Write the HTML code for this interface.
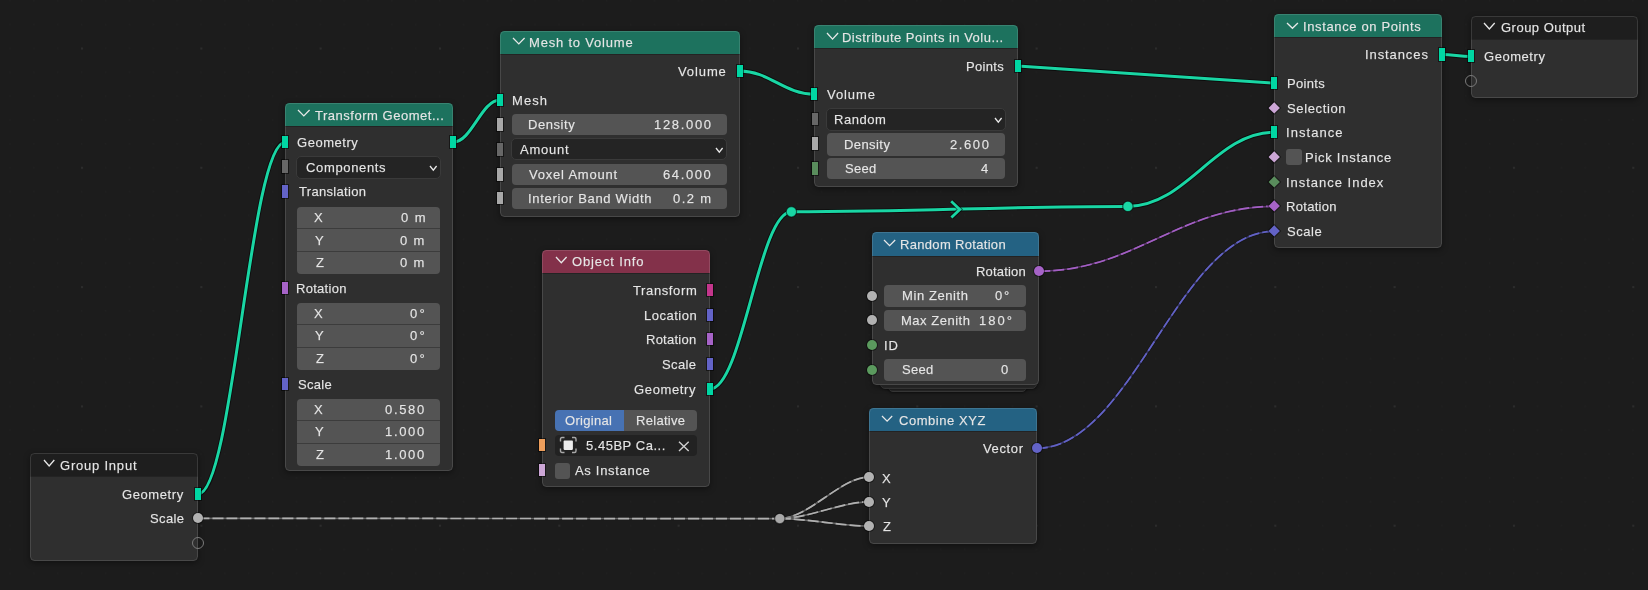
<!DOCTYPE html>
<html><head><meta charset="utf-8"><style>
html,body{margin:0;padding:0;width:1648px;height:590px;overflow:hidden;background:#1c1c1c;}
body{position:relative;font-family:"Liberation Sans", sans-serif;}
.a{position:absolute;overflow:visible}
.t{position:absolute;font-size:13px;line-height:15px;white-space:pre;color:#e6e6e6;will-change:transform;-webkit-text-stroke:0.25px rgba(230,230,230,0.6)}
.node{position:absolute;box-sizing:border-box;background:#2f2f2f;border-radius:4.5px;overflow:hidden;box-shadow:0 2px 6px rgba(0,0,0,0.4)}
.hdr{width:100%;border-bottom:1px solid #232323}
.ol{position:absolute;left:0;top:0;right:0;bottom:0;border:1px solid rgba(255,255,255,0.12);border-radius:4.5px}
.rs{position:absolute;box-shadow:0 0 0 1px rgba(0,0,0,0.5)}
.cs{position:absolute;border-radius:50%;box-shadow:0 0 0 1px rgba(0,0,0,0.45)}
.ds{position:absolute;transform:rotate(45deg);box-shadow:0 0 0 1px rgba(0,0,0,0.45)}
.fld{position:absolute}
.menu{position:absolute;box-sizing:border-box;background:#242424;border:1px solid #3a3a3a;border-radius:5px}
svg.links{position:absolute;left:0;top:0}
</style></head><body>
<svg class="links" width="1648" height="590"><defs><pattern id="gmin" x="81.0" y="47.5" width="23.865" height="23.86" patternUnits="userSpaceOnUse"><rect x="0" y="0" width="1.2" height="1.5" fill="#202020"/></pattern><pattern id="gmaj" x="81.0" y="47.5" width="119.33" height="119.3" patternUnits="userSpaceOnUse"><rect x="0" y="0" width="2" height="2" fill="#2c2c2c"/></pattern></defs><rect width="1648" height="590" fill="url(#gmin)"/><rect width="1648" height="590" fill="url(#gmaj)"/></svg>
<svg class="links" width="1648" height="590"><path d="M198.2,494.0 C233.0,494.0 250.3,142.2 285.1,142.2" fill="none" stroke="rgba(0,0,0,0.55)" stroke-width="4.8"/><path d="M198.2,494.0 C233.0,494.0 250.3,142.2 285.1,142.2" fill="none" stroke="#19d6a4" stroke-width="3.0"/><path d="M453.0,142.2 C471.8,142.2 481.2,100.0 500.0,100.0" fill="none" stroke="rgba(0,0,0,0.55)" stroke-width="4.8"/><path d="M453.0,142.2 C471.8,142.2 481.2,100.0 500.0,100.0" fill="none" stroke="#19d6a4" stroke-width="3.0"/><path d="M739.6,71.0 C769.4,71.0 784.4,94.2 814.2,94.2" fill="none" stroke="rgba(0,0,0,0.55)" stroke-width="4.8"/><path d="M739.6,71.0 C769.4,71.0 784.4,94.2 814.2,94.2" fill="none" stroke="#19d6a4" stroke-width="3.0"/><path d="M1017.8,66.0 L1274.2,83.2" fill="none" stroke="rgba(0,0,0,0.55)" stroke-width="4.8"/><path d="M1017.8,66.0 L1274.2,83.2" fill="none" stroke="#19d6a4" stroke-width="3.0"/><path d="M1441.8,54.5 C1453.4,54.5 1459.2,56.5 1470.8,56.5" fill="none" stroke="rgba(0,0,0,0.55)" stroke-width="4.8"/><path d="M1441.8,54.5 C1453.4,54.5 1459.2,56.5 1470.8,56.5" fill="none" stroke="#19d6a4" stroke-width="3.0"/><path d="M710.0,389.0 C742.6,389.0 758.8,211.8 791.4,211.8" fill="none" stroke="rgba(0,0,0,0.55)" stroke-width="4.8"/><path d="M710.0,389.0 C742.6,389.0 758.8,211.8 791.4,211.8" fill="none" stroke="#19d6a4" stroke-width="3.0"/><path d="M791.4,211.8 C926.0,211.8 993.3,206.4 1127.9,206.4" fill="none" stroke="rgba(0,0,0,0.55)" stroke-width="4.8"/><path d="M791.4,211.8 C926.0,211.8 993.3,206.4 1127.9,206.4" fill="none" stroke="#19d6a4" stroke-width="3.0"/><path d="M1127.9,206.4 C1186.4,206.4 1215.7,132.2 1274.2,132.2" fill="none" stroke="rgba(0,0,0,0.55)" stroke-width="4.8"/><path d="M1127.9,206.4 C1186.4,206.4 1215.7,132.2 1274.2,132.2" fill="none" stroke="#19d6a4" stroke-width="3.0"/><path d="M1039.2,271.2 C1133.2,271.2 1180.2,206.3 1274.2,206.3" fill="none" stroke="rgba(0,0,0,0.25)" stroke-width="3.2"/><path d="M1039.2,271.2 C1133.2,271.2 1180.2,206.3 1274.2,206.3" fill="none" stroke="#a35fc4" stroke-opacity="0.5" stroke-width="1.7"/><path d="M1039.2,271.2 C1133.2,271.2 1180.2,206.3 1274.2,206.3" fill="none" stroke="#a35fc4" stroke-width="1.7" stroke-dasharray="11 3"/><path d="M1036.8,448.3 C1131.8,448.3 1179.2,231.3 1274.2,231.3" fill="none" stroke="rgba(0,0,0,0.25)" stroke-width="3.2"/><path d="M1036.8,448.3 C1131.8,448.3 1179.2,231.3 1274.2,231.3" fill="none" stroke="#6262c6" stroke-opacity="0.5" stroke-width="1.7"/><path d="M1036.8,448.3 C1131.8,448.3 1179.2,231.3 1274.2,231.3" fill="none" stroke="#6262c6" stroke-width="1.7" stroke-dasharray="11 3"/><path d="M198.2,518.4 C430.8,518.4 547.2,518.6 779.8,518.6" fill="none" stroke="rgba(0,0,0,0.25)" stroke-width="3.2"/><path d="M198.2,518.4 C430.8,518.4 547.2,518.6 779.8,518.6" fill="none" stroke="#b0b0b0" stroke-opacity="0.5" stroke-width="1.7"/><path d="M198.2,518.4 C430.8,518.4 547.2,518.6 779.8,518.6" fill="none" stroke="#b0b0b0" stroke-width="1.7" stroke-dasharray="11 3"/><path d="M779.8,518.6 C808.5,518.6 840.7,476.9 869.4,476.9" fill="none" stroke="rgba(0,0,0,0.25)" stroke-width="3.2"/><path d="M779.8,518.6 C808.5,518.6 840.7,476.9 869.4,476.9" fill="none" stroke="#b0b0b0" stroke-opacity="0.5" stroke-width="1.7"/><path d="M779.8,518.6 C808.5,518.6 840.7,476.9 869.4,476.9" fill="none" stroke="#b0b0b0" stroke-width="1.7" stroke-dasharray="11 3"/><path d="M779.8,518.6 C808.5,518.6 840.7,501.8 869.4,501.8" fill="none" stroke="rgba(0,0,0,0.25)" stroke-width="3.2"/><path d="M779.8,518.6 C808.5,518.6 840.7,501.8 869.4,501.8" fill="none" stroke="#b0b0b0" stroke-opacity="0.5" stroke-width="1.7"/><path d="M779.8,518.6 C808.5,518.6 840.7,501.8 869.4,501.8" fill="none" stroke="#b0b0b0" stroke-width="1.7" stroke-dasharray="11 3"/><path d="M779.8,518.6 C808.5,518.6 840.7,526.0 869.4,526.0" fill="none" stroke="rgba(0,0,0,0.25)" stroke-width="3.2"/><path d="M779.8,518.6 C808.5,518.6 840.7,526.0 869.4,526.0" fill="none" stroke="#b0b0b0" stroke-opacity="0.5" stroke-width="1.7"/><path d="M779.8,518.6 C808.5,518.6 840.7,526.0 869.4,526.0" fill="none" stroke="#b0b0b0" stroke-width="1.7" stroke-dasharray="11 3"/><polyline points="951.2,201.2 959.8,209.4 951.4,217.6" fill="none" stroke="rgba(0,0,0,0.55)" stroke-width="4.6"/><polyline points="951.2,201.2 959.8,209.4 951.4,217.6" fill="none" stroke="#19d6a4" stroke-width="2.8"/><circle cx="791.4" cy="211.8" r="5.2" fill="#19d6a4" stroke="rgba(0,0,0,0.55)" stroke-width="1.2"/><circle cx="1127.9" cy="206.4" r="5.2" fill="#19d6a4" stroke="rgba(0,0,0,0.55)" stroke-width="1.2"/><circle cx="779.8" cy="518.6" r="5.2" fill="#a9a9a9" stroke="rgba(0,0,0,0.55)" stroke-width="1.2"/></svg>
<div class="node" style="left:30.4px;top:453.2px;width:167.9px;height:107.6px"><div class="hdr" style="height:22.8px;background:#1e1e1e"></div><div class="ol"></div></div>
<svg class="a" style="left:41.8px;top:458.2px" width="14.3" height="10.0"><polyline points="2,2 7.15,8.00 12.30,2" fill="none" stroke="#e8e8e8" stroke-width="1.3"/></svg>
<span class="t" style="left:60.30px;top:458.25px;letter-spacing:0.786px;color:#e6e6e6">Group Input</span>
<span class="t" style="left:122.40px;top:487.05px;letter-spacing:0.590px;color:#e6e6e6">Geometry</span>
<div class="rs" style="left:195.0px;top:487.7px;width:6px;height:12.3px;background:#00d6a3"></div>
<span class="t" style="left:150.40px;top:511.15px;letter-spacing:0.353px;color:#e6e6e6">Scale</span>
<div class="cs" style="left:193.0px;top:513.3px;width:10px;height:10px;background:#b2b2b2"></div>
<div class="cs" style="left:192.0px;top:537.0px;width:12px;height:12px;box-sizing:border-box;border:1.2px solid #7a7a7a;background:transparent;box-shadow:none"></div>
<div class="node" style="left:285.1px;top:103.1px;width:167.9px;height:367.9px"><div class="hdr" style="height:23.4px;background:#1d725e"></div><div class="ol"></div></div>
<svg class="a" style="left:296.2px;top:108.4px" width="15.6" height="9.9"><polyline points="2,2 7.80,7.90 13.60,2" fill="none" stroke="#e8e8e8" stroke-width="1.3"/></svg>
<span class="t" style="left:314.60px;top:108.15px;letter-spacing:0.521px;color:#e6e6e6">Transform Geomet...</span>
<span class="t" style="left:297.40px;top:135.25px;letter-spacing:0.533px;color:#e6e6e6">Geometry</span>
<div class="rs" style="left:282.1px;top:135.8px;width:6px;height:12.3px;background:#00d6a3"></div>
<div class="rs" style="left:450.0px;top:135.8px;width:6px;height:12.3px;background:#00d6a3"></div>
<div class="menu" style="left:296.3px;top:155.8px;width:144.7px;height:23.3px"></div>
<svg class="a" style="left:428.2px;top:164.4px" width="10.6" height="8.2"><polyline points="2,2 5.30,6.20 8.60,2" fill="none" stroke="#e8e8e8" stroke-width="1.3"/></svg>
<span class="t" style="left:305.50px;top:160.15px;letter-spacing:0.655px;color:#e6e6e6">Components</span>
<div class="rs" style="left:282.1px;top:160.4px;width:6px;height:12.3px;background:#676767"></div>
<span class="t" style="left:298.50px;top:183.95px;letter-spacing:0.310px;color:#e6e6e6">Translation</span>
<div class="rs" style="left:282.1px;top:185.3px;width:6px;height:12.3px;background:#6363c7"></div>
<div class="fld" style="left:296.8px;top:206.6px;width:143.4px;height:67.7px;background:#545454;border-radius:4px;"></div>
<div class="a" style="left:296.8px;top:227.6px;width:143.4px;height:1.2px;background:#3c3c3c"></div>
<div class="a" style="left:296.8px;top:250.7px;width:143.4px;height:1.2px;background:#3c3c3c"></div>
<span class="t" style="left:314.20px;top:210.45px;letter-spacing:0.000px;color:#e6e6e6">X</span>
<span class="t" style="left:400.50px;top:210.45px;letter-spacing:1.429px;color:#e6e6e6">0 m</span>
<span class="t" style="left:315.20px;top:232.65px;letter-spacing:0.000px;color:#e6e6e6">Y</span>
<span class="t" style="left:399.60px;top:232.65px;letter-spacing:1.379px;color:#e6e6e6">0 m</span>
<span class="t" style="left:315.50px;top:255.35px;letter-spacing:0.000px;color:#e6e6e6">Z</span>
<span class="t" style="left:399.60px;top:255.35px;letter-spacing:1.379px;color:#e6e6e6">0 m</span>
<span class="t" style="left:296.10px;top:280.85px;letter-spacing:0.287px;color:#e6e6e6">Rotation</span>
<div class="rs" style="left:282.1px;top:281.9px;width:6px;height:12.3px;background:#a663c7"></div>
<div class="fld" style="left:296.8px;top:302.6px;width:143.4px;height:67.4px;background:#545454;border-radius:4px;"></div>
<div class="a" style="left:296.8px;top:323.7px;width:143.4px;height:1.2px;background:#3c3c3c"></div>
<div class="a" style="left:296.8px;top:346.9px;width:143.4px;height:1.2px;background:#3c3c3c"></div>
<span class="t" style="left:314.20px;top:306.05px;letter-spacing:0.000px;color:#e6e6e6">X</span>
<span class="t" style="left:410.30px;top:306.05px;letter-spacing:2.170px;color:#e6e6e6">0°</span>
<span class="t" style="left:315.20px;top:328.25px;letter-spacing:0.000px;color:#e6e6e6">Y</span>
<span class="t" style="left:409.50px;top:328.25px;letter-spacing:2.170px;color:#e6e6e6">0°</span>
<span class="t" style="left:315.50px;top:351.15px;letter-spacing:0.000px;color:#e6e6e6">Z</span>
<span class="t" style="left:409.50px;top:351.15px;letter-spacing:2.170px;color:#e6e6e6">0°</span>
<span class="t" style="left:297.60px;top:376.95px;letter-spacing:0.278px;color:#e6e6e6">Scale</span>
<div class="rs" style="left:282.1px;top:377.9px;width:6px;height:12.3px;background:#6363c7"></div>
<div class="fld" style="left:296.8px;top:398.8px;width:143.4px;height:67.2px;background:#545454;border-radius:4px;"></div>
<div class="a" style="left:296.8px;top:419.9px;width:143.4px;height:1.2px;background:#3c3c3c"></div>
<div class="a" style="left:296.8px;top:442.8px;width:143.4px;height:1.2px;background:#3c3c3c"></div>
<span class="t" style="left:314.20px;top:402.35px;letter-spacing:0.000px;color:#e6e6e6">X</span>
<span class="t" style="left:385.30px;top:402.35px;letter-spacing:1.650px;color:#e6e6e6">0.580</span>
<span class="t" style="left:315.20px;top:424.45px;letter-spacing:0.000px;color:#e6e6e6">Y</span>
<span class="t" style="left:384.60px;top:424.45px;letter-spacing:1.650px;color:#e6e6e6">1.000</span>
<span class="t" style="left:315.50px;top:447.45px;letter-spacing:0.000px;color:#e6e6e6">Z</span>
<span class="t" style="left:384.60px;top:447.45px;letter-spacing:1.650px;color:#e6e6e6">1.000</span>
<div class="node" style="left:500.0px;top:31.0px;width:239.8px;height:185.5px"><div class="hdr" style="height:23.0px;background:#1d725e"></div><div class="ol"></div></div>
<svg class="a" style="left:511.2px;top:36.4px" width="15.6" height="9.9"><polyline points="2,2 7.80,7.90 13.60,2" fill="none" stroke="#e8e8e8" stroke-width="1.3"/></svg>
<span class="t" style="left:528.60px;top:35.25px;letter-spacing:0.801px;color:#e6e6e6">Mesh to Volume</span>
<span class="t" style="left:677.60px;top:63.65px;letter-spacing:0.894px;color:#e6e6e6">Volume</span>
<div class="rs" style="left:736.6px;top:64.8px;width:6px;height:12.3px;background:#00d6a3"></div>
<span class="t" style="left:511.50px;top:93.15px;letter-spacing:1.047px;color:#e6e6e6">Mesh</span>
<div class="rs" style="left:497.0px;top:93.8px;width:6px;height:12.3px;background:#00d6a3"></div>
<div class="fld" style="left:511.8px;top:113.5px;width:215.2px;height:21.7px;background:#545454;border-radius:4px;"></div>
<span class="t" style="left:528.00px;top:116.95px;letter-spacing:0.559px;color:#e6e6e6">Density</span>
<span class="t" style="left:653.50px;top:116.95px;letter-spacing:1.673px;color:#e6e6e6">128.000</span>
<div class="rs" style="left:497.0px;top:118.3px;width:6px;height:12.3px;background:#a8a8a8"></div>
<div class="menu" style="left:511.3px;top:138.3px;width:216.2px;height:22.2px"></div>
<svg class="a" style="left:714.4px;top:145.5px" width="10.6" height="8.2"><polyline points="2,2 5.30,6.20 8.60,2" fill="none" stroke="#e8e8e8" stroke-width="1.3"/></svg>
<span class="t" style="left:520.40px;top:142.05px;letter-spacing:0.742px;color:#e6e6e6">Amount</span>
<div class="rs" style="left:497.0px;top:143.3px;width:6px;height:12.3px;background:#676767"></div>
<div class="fld" style="left:511.8px;top:163.6px;width:215.2px;height:21.9px;background:#545454;border-radius:4px;"></div>
<span class="t" style="left:529.00px;top:167.15px;letter-spacing:0.781px;color:#e6e6e6">Voxel Amount</span>
<span class="t" style="left:662.70px;top:167.15px;letter-spacing:1.614px;color:#e6e6e6">64.000</span>
<div class="rs" style="left:497.0px;top:168.3px;width:6px;height:12.3px;background:#a8a8a8"></div>
<div class="fld" style="left:511.8px;top:187.6px;width:215.2px;height:21.7px;background:#545454;border-radius:4px;"></div>
<span class="t" style="left:528.00px;top:190.95px;letter-spacing:0.675px;color:#e6e6e6">Interior Band Width</span>
<span class="t" style="left:673.30px;top:190.95px;letter-spacing:1.404px;color:#e6e6e6">0.2 m</span>
<div class="rs" style="left:497.0px;top:192.2px;width:6px;height:12.3px;background:#a8a8a8"></div>
<div class="node" style="left:814.2px;top:25.1px;width:203.7px;height:162.2px"><div class="hdr" style="height:23.4px;background:#1d725e"></div><div class="ol"></div></div>
<svg class="a" style="left:824.6px;top:31.3px" width="15.1" height="10.1"><polyline points="2,2 7.55,8.10 13.10,2" fill="none" stroke="#e8e8e8" stroke-width="1.3"/></svg>
<span class="t" style="left:842.40px;top:30.25px;letter-spacing:0.485px;color:#e6e6e6">Distribute Points in Volu...</span>
<span class="t" style="left:966.30px;top:59.15px;letter-spacing:0.314px;color:#e6e6e6">Points</span>
<div class="rs" style="left:1014.6px;top:59.6px;width:6px;height:12.3px;background:#00d6a3"></div>
<span class="t" style="left:827.30px;top:87.15px;letter-spacing:0.934px;color:#e6e6e6">Volume</span>
<div class="rs" style="left:811.4px;top:88.0px;width:6px;height:12.3px;background:#00d6a3"></div>
<div class="menu" style="left:826.2px;top:108.4px;width:179.8px;height:22.4px"></div>
<svg class="a" style="left:992.8px;top:116.3px" width="10.6" height="8.2"><polyline points="2,2 5.30,6.20 8.60,2" fill="none" stroke="#e8e8e8" stroke-width="1.3"/></svg>
<span class="t" style="left:834.30px;top:112.45px;letter-spacing:0.518px;color:#e6e6e6">Random</span>
<div class="rs" style="left:811.6px;top:112.8px;width:6px;height:12.3px;background:#676767"></div>
<div class="fld" style="left:826.7px;top:133.0px;width:178.8px;height:22.6px;background:#545454;border-radius:4px;"></div>
<span class="t" style="left:844.30px;top:136.95px;letter-spacing:0.425px;color:#e6e6e6">Density</span>
<span class="t" style="left:949.60px;top:136.95px;letter-spacing:1.600px;color:#e6e6e6">2.600</span>
<div class="rs" style="left:811.6px;top:137.3px;width:6px;height:12.3px;background:#a8a8a8"></div>
<div class="fld" style="left:826.7px;top:157.7px;width:178.8px;height:21.5px;background:#545454;border-radius:4px;"></div>
<span class="t" style="left:844.50px;top:161.05px;letter-spacing:0.290px;color:#e6e6e6">Seed</span>
<span class="t" style="left:981.40px;top:161.05px;letter-spacing:0.000px;color:#e6e6e6">4</span>
<div class="rs" style="left:811.6px;top:162.3px;width:6px;height:12.3px;background:#598c5c"></div>
<div class="node" style="left:1274.2px;top:14.2px;width:167.6px;height:234.2px"><div class="hdr" style="height:23.3px;background:#1d725e"></div><div class="ol"></div></div>
<svg class="a" style="left:1284.8px;top:21.2px" width="14.9" height="9.3"><polyline points="2,2 7.45,7.30 12.90,2" fill="none" stroke="#e8e8e8" stroke-width="1.3"/></svg>
<span class="t" style="left:1302.50px;top:19.35px;letter-spacing:0.632px;color:#e6e6e6">Instance on Points</span>
<span class="t" style="left:1365.20px;top:47.15px;letter-spacing:0.907px;color:#e6e6e6">Instances</span>
<div class="rs" style="left:1438.8px;top:48.4px;width:6px;height:12.3px;background:#00d6a3"></div>
<span class="t" style="left:1287.00px;top:75.85px;letter-spacing:0.314px;color:#e6e6e6">Points</span>
<div class="rs" style="left:1271.4px;top:76.8px;width:6px;height:12.3px;background:#00d6a3"></div>
<span class="t" style="left:1287.40px;top:101.25px;letter-spacing:0.631px;color:#e6e6e6">Selection</span>
<div class="ds" style="left:1270.2px;top:104.0px;width:8.4px;height:8.4px;background:#cca6d6"></div>
<span class="t" style="left:1285.90px;top:125.35px;letter-spacing:1.055px;color:#e6e6e6">Instance</span>
<div class="rs" style="left:1271.4px;top:126.0px;width:6px;height:12.3px;background:#00d6a3"></div>
<div class="fld" style="left:1286.4px;top:149.4px;width:15.9px;height:16.1px;background:#545454;border-radius:3px;"></div>
<span class="t" style="left:1305.40px;top:150.35px;letter-spacing:0.735px;color:#e6e6e6">Pick Instance</span>
<div class="ds" style="left:1270.2px;top:153.3px;width:8.4px;height:8.4px;background:#cca6d6"></div>
<span class="t" style="left:1285.90px;top:175.25px;letter-spacing:0.980px;color:#e6e6e6">Instance Index</span>
<div class="ds" style="left:1270.2px;top:178.0px;width:8.4px;height:8.4px;background:#598c5c"></div>
<span class="t" style="left:1285.90px;top:198.95px;letter-spacing:0.301px;color:#e6e6e6">Rotation</span>
<div class="ds" style="left:1270.2px;top:202.1px;width:8.4px;height:8.4px;background:#a663c7"></div>
<span class="t" style="left:1286.90px;top:224.05px;letter-spacing:0.528px;color:#e6e6e6">Scale</span>
<div class="ds" style="left:1270.2px;top:227.1px;width:8.4px;height:8.4px;background:#6363c7"></div>
<div class="node" style="left:1470.6px;top:16.0px;width:167.8px;height:82.4px"><div class="hdr" style="height:22.5px;background:#1e1e1e"></div><div class="ol"></div></div>
<svg class="a" style="left:1481.6px;top:21.3px" width="14.7" height="10.0"><polyline points="2,2 7.35,8.00 12.70,2" fill="none" stroke="#e8e8e8" stroke-width="1.3"/></svg>
<span class="t" style="left:1500.50px;top:20.35px;letter-spacing:0.486px;color:#e6e6e6">Group Output</span>
<span class="t" style="left:1483.60px;top:49.25px;letter-spacing:0.547px;color:#e6e6e6">Geometry</span>
<div class="rs" style="left:1468.0px;top:50.2px;width:6px;height:12.3px;background:#00d6a3"></div>
<div class="cs" style="left:1465.0px;top:74.6px;width:12px;height:12px;box-sizing:border-box;border:1.2px solid #7a7a7a;background:transparent;box-shadow:none"></div>
<div class="node" style="left:542.4px;top:249.8px;width:167.6px;height:237.0px"><div class="hdr" style="height:23.0px;background:#83314a"></div><div class="ol"></div></div>
<svg class="a" style="left:553.6px;top:255.3px" width="14.6" height="9.7"><polyline points="2,2 7.30,7.70 12.60,2" fill="none" stroke="#e8e8e8" stroke-width="1.3"/></svg>
<span class="t" style="left:571.50px;top:254.25px;letter-spacing:0.866px;color:#e6e6e6">Object Info</span>
<span class="t" style="left:633.30px;top:283.35px;letter-spacing:0.623px;color:#e6e6e6">Transform</span>
<div class="rs" style="left:706.8px;top:283.7px;width:6px;height:12.3px;background:#c4368c"></div>
<span class="t" style="left:643.70px;top:307.95px;letter-spacing:0.511px;color:#e6e6e6">Location</span>
<div class="rs" style="left:706.8px;top:309.1px;width:6px;height:12.3px;background:#6363c7"></div>
<span class="t" style="left:646.30px;top:332.15px;letter-spacing:0.244px;color:#e6e6e6">Rotation</span>
<div class="rs" style="left:706.8px;top:333.2px;width:6px;height:12.3px;background:#a663c7"></div>
<span class="t" style="left:662.40px;top:356.95px;letter-spacing:0.378px;color:#e6e6e6">Scale</span>
<div class="rs" style="left:706.8px;top:358.1px;width:6px;height:12.3px;background:#6363c7"></div>
<span class="t" style="left:634.10px;top:381.65px;letter-spacing:0.647px;color:#e6e6e6">Geometry</span>
<div class="rs" style="left:706.8px;top:382.9px;width:6px;height:12.3px;background:#00d6a3"></div>
<div class="fld" style="left:554.8px;top:409.7px;width:69.2px;height:21.2px;background:#4772b3;border-radius:4px 0 0 4px;"></div>
<div class="fld" style="left:624.0px;top:409.7px;width:73.0px;height:21.2px;background:#545454;border-radius:0 4px 4px 0;"></div>
<span class="t" style="left:565.40px;top:413.15px;letter-spacing:0.313px;color:#e6e6e6">Original</span>
<span class="t" style="left:635.60px;top:413.15px;letter-spacing:0.295px;color:#e6e6e6">Relative</span>
<div class="fld" style="left:555.3px;top:434.6px;width:141.7px;height:21.4px;background:#222222;border-radius:4px;"></div>
<svg class="a" style="left:558.5px;top:436.3px" width="20" height="19"><path d="M1.5,5.5 V3 Q1.5,1.5 3,1.5 H5.5 M13,1.5 H15.5 Q17,1.5 17,3 V5.5 M17,12.5 V15 Q17,16.5 15.5,16.5 H13 M5.5,16.5 H3 Q1.5,16.5 1.5,15 V12.5" fill="none" stroke="#a8a8a8" stroke-width="1.4"/><rect x="4.6" y="4.6" width="9.3" height="9.3" rx="0.8" fill="#ececec"/></svg>
<span class="t" style="left:585.90px;top:438.15px;letter-spacing:0.528px;color:#e6e6e6">5.45BP Ca...</span>
<svg class="a" style="left:677.3px;top:439.9px" width="14" height="13"><path d="M2,1.8 L11.7,11 M11.7,1.8 L2,11" stroke="#d0d0d0" stroke-width="1.4"/></svg>
<div class="rs" style="left:539.4px;top:438.9px;width:6px;height:12.3px;background:#ed9e5c"></div>
<div class="fld" style="left:554.8px;top:462.8px;width:15.3px;height:15.8px;background:#545454;border-radius:3px;"></div>
<span class="t" style="left:574.60px;top:463.15px;letter-spacing:0.690px;color:#e6e6e6">As Instance</span>
<div class="rs" style="left:539.4px;top:464.1px;width:6px;height:12.3px;background:#cca6d6"></div>
<div class="a" style="left:887.5px;top:364.8px;width:139.9px;height:27.5px;box-sizing:border-box;background:#2b2b2b;border:1px solid #393939;border-radius:5px;box-shadow:0 1px 3px rgba(0,0,0,.5)"></div>
<div class="a" style="left:879.5px;top:364.8px;width:157.9px;height:24.5px;box-sizing:border-box;background:#2d2d2d;border:1px solid #3b3b3b;border-radius:5px;box-shadow:0 1px 2px rgba(0,0,0,.4)"></div>
<div class="node" style="left:871.5px;top:232.0px;width:167.9px;height:152.8px"><div class="hdr" style="height:23.5px;background:#246283"></div><div class="ol"></div></div>
<svg class="a" style="left:882.4px;top:238.0px" width="15.2" height="9.6"><polyline points="2,2 7.60,7.60 13.20,2" fill="none" stroke="#e8e8e8" stroke-width="1.3"/></svg>
<span class="t" style="left:900.20px;top:237.25px;letter-spacing:0.319px;color:#e6e6e6">Random Rotation</span>
<span class="t" style="left:975.70px;top:264.15px;letter-spacing:0.187px;color:#e6e6e6">Rotation</span>
<div class="cs" style="left:1033.9px;top:266.0px;width:10.4px;height:10.4px;background:#a663c7"></div>
<div class="fld" style="left:884.0px;top:285.3px;width:142.2px;height:21.8px;background:#545454;border-radius:4px;"></div>
<span class="t" style="left:901.60px;top:288.45px;letter-spacing:0.593px;color:#e6e6e6">Min Zenith</span>
<span class="t" style="left:995.30px;top:288.45px;letter-spacing:1.770px;color:#e6e6e6">0°</span>
<div class="cs" style="left:867.0px;top:290.8px;width:10px;height:10px;background:#b2b2b2"></div>
<div class="fld" style="left:884.0px;top:309.9px;width:142.2px;height:20.9px;background:#545454;border-radius:4px;"></div>
<span class="t" style="left:900.50px;top:312.95px;letter-spacing:0.514px;color:#e6e6e6">Max Zenith</span>
<span class="t" style="left:978.50px;top:312.95px;letter-spacing:2.003px;color:#e6e6e6">180°</span>
<div class="cs" style="left:867.0px;top:315.3px;width:10px;height:10px;background:#b2b2b2"></div>
<span class="t" style="left:884.29px;top:338.15px;letter-spacing:0.800px;color:#e6e6e6">ID</span>
<div class="cs" style="left:867.0px;top:340.1px;width:10px;height:10px;background:#5b9a5e"></div>
<div class="fld" style="left:884.0px;top:358.7px;width:142.2px;height:22.6px;background:#545454;border-radius:4px;"></div>
<span class="t" style="left:902.40px;top:362.15px;letter-spacing:0.290px;color:#e6e6e6">Seed</span>
<span class="t" style="left:1001.40px;top:362.15px;letter-spacing:0.000px;color:#e6e6e6">0</span>
<div class="cs" style="left:867.0px;top:364.5px;width:10px;height:10px;background:#5b9a5e"></div>
<div class="node" style="left:869.4px;top:408.1px;width:167.4px;height:136.3px"><div class="hdr" style="height:22.9px;background:#246283"></div><div class="ol"></div></div>
<svg class="a" style="left:880.4px;top:413.8px" width="14.2" height="9.1"><polyline points="2,2 7.10,7.10 12.20,2" fill="none" stroke="#e8e8e8" stroke-width="1.3"/></svg>
<span class="t" style="left:898.70px;top:413.25px;letter-spacing:0.542px;color:#e6e6e6">Combine XYZ</span>
<span class="t" style="left:982.60px;top:441.15px;letter-spacing:0.635px;color:#e6e6e6">Vector</span>
<div class="cs" style="left:1031.8px;top:443.3px;width:10px;height:10px;background:#6363c7"></div>
<span class="t" style="left:882.40px;top:470.55px;letter-spacing:0.000px;color:#e6e6e6">X</span>
<div class="cs" style="left:864.4px;top:471.9px;width:10px;height:10px;background:#b2b2b2"></div>
<span class="t" style="left:882.40px;top:495.35px;letter-spacing:0.000px;color:#e6e6e6">Y</span>
<div class="cs" style="left:864.4px;top:496.8px;width:10px;height:10px;background:#b2b2b2"></div>
<span class="t" style="left:882.60px;top:519.35px;letter-spacing:0.000px;color:#e6e6e6">Z</span>
<div class="cs" style="left:864.4px;top:521.0px;width:10px;height:10px;background:#b2b2b2"></div>
</body></html>
